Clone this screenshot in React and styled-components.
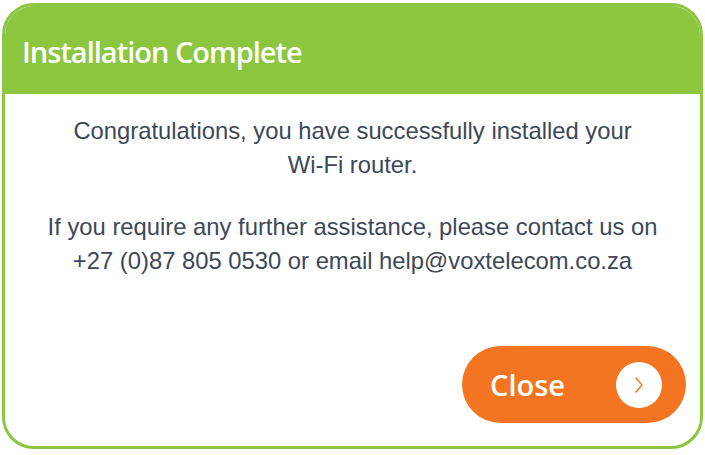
import React from 'react';
import styled, { createGlobalStyle } from 'styled-components';

const GlobalStyle = createGlobalStyle`
  html, body {
    margin: 0;
    padding: 0;
    background: #fff;
  }
`;

const Card = styled.div`
  box-sizing: border-box;
  width: 701px;
  height: 446px;
  margin: 3px 0 0 2px;
  border: 3px solid #8cc63f;
  border-radius: 32px;
  overflow: hidden;
  background: #fff;
  display: flex;
  flex-direction: column;
`;

const Header = styled.div`
  height: 88px;
  background: #8cc63f;
  display: flex;
  align-items: center;
  padding-left: 17px;
  padding-top: 2px;
  box-sizing: border-box;
`;

const Title = styled.h1`
  margin: 0;
  color: #fff;
  font-family: 'Open Sans', 'Noto Sans', sans-serif;
  font-weight: 600;
  font-size: 29px;
  letter-spacing: -1px;
`;

const Body = styled.div`
  flex: 1;
  display: flex;
  flex-direction: column;
  padding: 20px 14px 23px 14px;
`;

const Text = styled.p`
  margin: 0 0 28px;
  text-align: center;
  color: #3c4858;
  font-family: 'Liberation Sans', Arial, sans-serif;
  font-size: 23.8px;
  line-height: 34px;
`;

const Actions = styled.div`
  margin-top: auto;
  display: flex;
  justify-content: flex-end;
`;

const Button = styled.button`
  width: 224px;
  height: 77px;
  border: 0;
  border-radius: 39px;
  background: #f37521;
  display: flex;
  align-items: center;
  justify-content: space-between;
  padding: 0 24px 0 28px;
  box-sizing: border-box;
  cursor: pointer;
  color: #fff;
  font-family: 'Open Sans', 'Noto Sans', sans-serif;
  font-weight: 600;
  font-size: 29px;
`;

const Circle = styled.span`
  width: 46px;
  height: 46px;
  border-radius: 50%;
  background: #fff;
  display: flex;
  align-items: center;
  justify-content: center;
`;

export default function App() {
  return (
    <>
      <GlobalStyle />
      <Card>
        <Header>
          <Title>Installation Complete</Title>
        </Header>
        <Body>
          <Text>
            Congratulations, you have successfully installed your
            <br />
            Wi-Fi router.
          </Text>
          <Text>
            If you require any further assistance, please contact us on
            <br />
            +27 (0)87 805 0530 or email help@voxtelecom.co.za
          </Text>
          <Actions>
            <Button>
              Close
              <Circle>
                <svg width="14" height="18" viewBox="0 0 14 18">
                  <path d="M4 2 L10 9 L4 16" fill="none" stroke="#f37521" strokeWidth="1.4" strokeLinecap="round" />
                </svg>
              </Circle>
            </Button>
          </Actions>
        </Body>
      </Card>
    </>
  );
}
